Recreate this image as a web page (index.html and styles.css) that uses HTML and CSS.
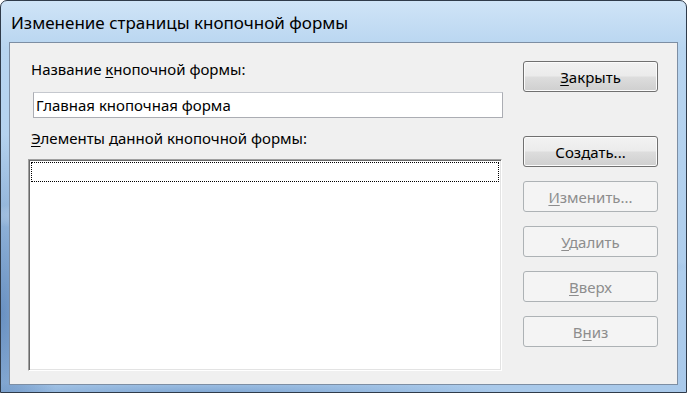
FILE: index.html
```html
<!doctype html>
<html lang="ru">

<head>
  <meta charset="UTF-8" />
  <title>Изменение страницы кнопочной формы</title>
  <link rel="stylesheet" href="styles.css">
</head>

<body>
  <div class="window">
    <div class="titlebar">
      <span class="title">Изменение страницы кнопочной формы</span>
    </div>
    <div class="client">
      <div class="main">
        <label class="field-label" for="switchboardName">Название <u>к</u>нопочной формы:</label>
        <input class="name-input" type="text" id="switchboardName" value="Главная кнопочная форма" />
        <div class="field-label list-label"><u>Э</u>лементы данной кнопочной формы:</div>
        <div class="listbox">
          <div class="list-item focused"></div>
        </div>
      </div>
      <div class="buttons">
        <button class="btn btn-close"><u>З</u>акрыть</button>
        <div class="btn-group">
          <button class="btn">Соз<u>д</u>ать...</button>
          <button class="btn" disabled><u>И</u>зменить...</button>
          <button class="btn" disabled><u>У</u>далить</button>
          <button class="btn" disabled><u>В</u>верх</button>
          <button class="btn" disabled>В<u>н</u>из</button>
        </div>
      </div>
    </div>
  </div>
</body>

</html>
```

FILE: styles.css
```css
body {
  margin: 0;
  background-color: #ffffff;
  font-family: 'Noto Sans', 'DejaVu Sans', sans-serif;
}

.window {
  width: 687px;
  height: 393px;
  box-sizing: border-box;
  border: 1px solid #2f3b4a;
  border-radius: 7px 7px 0 0;
  background:
    radial-gradient(ellipse 190px 20px at 24% 55%, rgba(255, 255, 255, 0.8), rgba(255, 255, 255, 0) 100%),
    radial-gradient(ellipse 150px 12px at 62% 78%, rgba(80, 130, 195, 0.7), rgba(80, 130, 195, 0) 100%),
    radial-gradient(ellipse 110px 10px at 85% 68%, rgba(95, 145, 205, 0.6), rgba(95, 145, 205, 0) 100%),
    radial-gradient(ellipse 60px 180px at 0% 80%, rgba(60, 105, 165, 0.6), rgba(60, 105, 165, 0) 100%),
    radial-gradient(ellipse 300px 12px at 30% 100%, rgba(85, 130, 185, 0.45), rgba(85, 130, 185, 0) 100%),
    linear-gradient(to bottom, #cfe4f7 0%, #b8d5f0 12%, #a9c9ea 100%);
  display: flex;
  flex-direction: column;
  overflow: hidden;
}

.titlebar {
  height: 41px;
  display: flex;
  align-items: center;
  padding-left: 10px;
}

.title {
  font-size: 17px;
  color: #000000;
  padding-top: 1px;
}

.client {
  margin: 0 8px 7px 8px;
  height: 343px;
  box-sizing: border-box;
  border: 1px solid #7d8ea3;
  background-color: #f0f0f0;
  display: flex;
}

.main {
  width: 474px;
  padding-left: 18px;
  display: flex;
  flex-direction: column;
}

.field-label {
  display: block;
  font-size: 15px;
  line-height: 20px;
  color: #000000;
  margin-left: 3px;
  margin-top: 16px;
}

.name-input {
  margin: 13px 0 0 5px;
  width: 470px;
  height: 26px;
  box-sizing: border-box;
  border: 1px solid #abadb3;
  border-top-color: #c5c8ce;
  padding: 0 2px;
  font-family: 'Noto Sans', 'DejaVu Sans', sans-serif;
  font-size: 15px;
  color: #000000;
  background-color: #ffffff;
  outline: none;
}

.list-label {
  margin-top: 10px;
}

.listbox {
  margin-top: 11px;
  height: 212px;
  box-sizing: border-box;
  background-color: #ffffff;
  border: 1px solid;
  border-color: #a0a0a0 #ffffff #ffffff #a0a0a0;
  box-shadow: inset 1px 1px 0 #696969, inset -1px -1px 0 #e3e3e3;
  padding: 2px 2px 0 2px;
}

.list-item {
  height: 20px;
}

.list-item.focused {
  border: 1px dotted #000000;
  box-sizing: border-box;
}

.buttons {
  margin-left: 21px;
  padding-top: 18px;
  display: flex;
  flex-direction: column;
}

.btn-group {
  margin-top: 44px;
  display: flex;
  flex-direction: column;
  gap: 14px;
}

.btn {
  width: 135px;
  height: 31px;
  padding: 0;
  border: 1px solid #707070;
  border-radius: 3px;
  background: linear-gradient(to bottom, #f2f2f2 0%, #ebebeb 48%, #dddddd 52%, #cfcfcf 100%);
  box-shadow: inset 0 0 0 1px #fbfbfb;
  font-family: 'Noto Sans', 'DejaVu Sans', sans-serif;
  font-size: 15px;
  color: #000000;
}

.btn:disabled {
  border-color: #adb2b5;
  background: #f4f4f4;
  box-shadow: none;
  color: #8d8d8d;
}

u {
  text-decoration-thickness: 1px;
  text-underline-offset: 2px;
}
```
